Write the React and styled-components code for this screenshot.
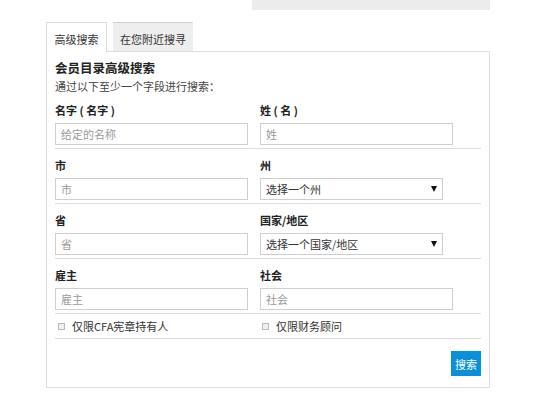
import React from "react";
import styled, { createGlobalStyle } from "styled-components";

const GlobalStyle = createGlobalStyle`
  body {
    margin: 0;
    background: #fff;
    font-family: "Noto Sans CJK SC", "Liberation Sans", sans-serif;
    color: #333;
  }
`;

const Page = styled.div`
  width: 444px;
  margin-left: 46px;
`;

const TopBar = styled.div`
  width: 238px;
  height: 10px;
  margin-left: auto;
  background: #ececec;
`;

const TabBar = styled.div`
  display: flex;
  align-items: flex-end;
  gap: 6px;
  margin-top: 12px;
  position: relative;
  z-index: 1;
`;

const Tab = styled.div`
  box-sizing: border-box;
  height: ${({ active }) => (active ? "30px" : "29px")};
  margin-bottom: ${({ active }) => (active ? "-1px" : "0")};
  width: ${({ w }) => w}px;
  padding-top: 8px;
  text-align: center;
  font-size: 11px;
  line-height: 16px;
  color: #333;
  background: ${({ active }) => (active ? "#fff" : "#eee")};
  border: 1px solid ${({ active }) => (active ? "#ddd" : "transparent")};
  border-top-color: ${({ active }) => (active ? "#ddd" : "#d0d0d0")};
  border-bottom: none;
`;

const Panel = styled.div`
  border: 1px solid #ddd;
  padding: 7px 8px 0 8px;
`;

const Title = styled.div`
  font-size: 12.5px;
  font-weight: bold;
  line-height: 18px;
  color: #222;
`;

const Subtitle = styled.div`
  font-size: 11px;
  line-height: 18px;
  color: #444;
`;

const Row = styled.div`
  display: grid;
  grid-template-columns: 205px 1fr;
  padding: ${({ first }) => (first ? "5px" : "6px")} 0 3px 0;
  border-bottom: 1px solid #ddd;
`;

const Field = styled.div`
  display: flex;
  flex-direction: column;
  gap: 3px;
`;

const Label = styled.label`
  font-size: 11px;
  font-weight: bold;
  line-height: 20px;
  color: #222;
`;

const TextInput = styled.input`
  display: block;
  box-sizing: border-box;
  width: 193px;
  height: 22px;
  padding: 0 5px;
  border: 1px solid #cfcfcf;
  outline: none;
  font-family: inherit;
  font-size: 11px;
  color: #333;
  &::placeholder {
    color: #999;
  }
`;

const SelectWrap = styled.div`
  position: relative;
  width: 183px;
  height: 22px;
  &::after {
    content: "";
    position: absolute;
    right: 6px;
    top: 8px;
    border-left: 3.5px solid transparent;
    border-right: 3.5px solid transparent;
    border-top: 6px solid #111;
    pointer-events: none;
  }
`;

const Select = styled.select`
  display: block;
  box-sizing: border-box;
  width: 100%;
  height: 22px;
  padding: 0 5px;
  border: 1px solid #cfcfcf;
  border-radius: 0;
  background: #fff;
  appearance: none;
  outline: none;
  font-family: inherit;
  font-size: 11px;
  color: #333;
`;

const CheckRow = styled.div`
  display: grid;
  grid-template-columns: 205px 1fr;
  height: 24px;
  align-items: center;
  border-bottom: 1px solid #ddd;
`;

const Check = styled.label`
  display: flex;
  align-items: center;
  gap: 7px;
  padding-left: ${({ pad }) => pad}px;
  font-size: 11px;
  color: #333;
`;

const Box = styled.span`
  box-sizing: border-box;
  width: 7px;
  height: 7px;
  border: 1px solid #bbb;
  background: #eee;
`;

const Actions = styled.div`
  display: flex;
  justify-content: flex-end;
  padding: 12px 0 11px 0;
`;

const Button = styled.button`
  width: 30px;
  height: 25px;
  padding: 0;
  border: none;
  background: #0b8fd9;
  color: #fff;
  font-family: inherit;
  font-size: 11px;
`;

const SelectField = ({ value }) => (
  <SelectWrap>
    <Select defaultValue="">
      <option value="">{value}</option>
    </Select>
  </SelectWrap>
);

export default function App() {
  return (
    <Page>
      <GlobalStyle />
      <TopBar />
      <TabBar>
        <Tab active w={61}>高级搜索</Tab>
        <Tab w={80}>在您附近搜寻</Tab>
      </TabBar>
      <Panel>
        <Title>会员目录高级搜索</Title>
        <Subtitle>通过以下至少一个字段进行搜索：</Subtitle>
        <Row first>
          <Field>
            <Label>名字 ( 名字 )</Label>
            <TextInput placeholder="给定的名称" />
          </Field>
          <Field>
            <Label>姓 ( 名 )</Label>
            <TextInput placeholder="姓" />
          </Field>
        </Row>
        <Row>
          <Field>
            <Label>市</Label>
            <TextInput placeholder="市" />
          </Field>
          <Field>
            <Label>州</Label>
            <SelectField value="选择一个州" />
          </Field>
        </Row>
        <Row>
          <Field>
            <Label>省</Label>
            <TextInput placeholder="省" />
          </Field>
          <Field>
            <Label>国家/地区</Label>
            <SelectField value="选择一个国家/地区" />
          </Field>
        </Row>
        <Row>
          <Field>
            <Label>雇主</Label>
            <TextInput placeholder="雇主" />
          </Field>
          <Field>
            <Label>社会</Label>
            <TextInput placeholder="社会" />
          </Field>
        </Row>
        <CheckRow>
          <Check pad={3}>
            <Box />
            仅限CFA宪章持有人
          </Check>
          <Check pad={2}>
            <Box />
            仅限财务顾问
          </Check>
        </CheckRow>
        <Actions>
          <Button>搜索</Button>
        </Actions>
      </Panel>
    </Page>
  );
}
